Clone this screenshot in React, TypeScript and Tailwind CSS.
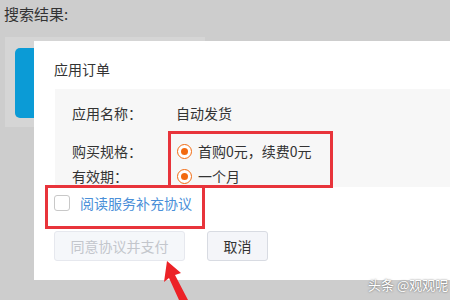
export default function App() {
  return (
    <div
      className="relative w-[450px] h-[300px] overflow-hidden bg-[#cdcdcd] text-[14px] text-[#333]"
      style={{ fontFamily: '"Noto Sans CJK SC", "Noto Sans", sans-serif' }}
    >
      {/* Page behind the dialog */}
      <div className="pl-[4px] pt-[4px] h-[21px] leading-[20px] text-[15px] text-[#333]">搜索结果:</div>
      <div className="ml-[5px] mt-[16px] w-[200px] h-[90px] bg-[#d5d5d5] pl-[10px] pt-[11px]">
        <div className="w-[40px] h-[70px] rounded-[5px] bg-[#0b9bd6]" />
      </div>

      {/* Dialog */}
      <div className="absolute left-[34px] top-[41px] w-[430px] h-[239px] bg-white">
        <div className="pl-[20px] pt-[18px] h-[48px] leading-[20px]">应用订单</div>
        <div className="ml-[21px] h-[98px] bg-[#f7f7f7] pl-[17px] pt-[14px]">
          <div className="flex h-[20px] items-center">
            <span className="w-[104px]">应用名称：</span>
            <span>自动发货</span>
          </div>
          <div className="flex h-[20px] items-center mt-[18px]">
            <span className="w-[105px]">购买规格：</span>
            <Radio />
            <span className="ml-[6px]">首购0元，续费0元</span>
          </div>
          <div className="flex h-[20px] items-center mt-[5px]">
            <span className="w-[105px]">有效期：</span>
            <Radio />
            <span className="ml-[6px]">一个月</span>
          </div>
        </div>
        <div className="flex items-center h-[40px] mt-[-4px] pl-[20px]">
          <span className="w-[16px] h-[16px] rounded-[3px] border border-[#c8c8c8] bg-white" />
          <span className="ml-[10px] text-[#4a8fd8]">阅读服务补充协议</span>
        </div>
        <div className="flex gap-[22px] pl-[20px] mt-[8px]">
          <button className="w-[131px] h-[30px] rounded-[3px] border border-[#e6e8ee] bg-[#f5f7fa] text-[#c3c6cc]">
            同意协议并支付
          </button>
          <button className="w-[61px] h-[30px] rounded-[3px] border border-[#d8dbe2] bg-[#f4f5f9] text-[#333]">
            取消
          </button>
        </div>
      </div>

      {/* Red annotations */}
      <div className="absolute left-[168px] top-[131px] w-[165px] h-[57px] border-[3px] border-[#e8343b]" />
      <div className="absolute left-[45px] top-[185px] w-[160px] h-[44px] border-[3px] border-[#e8343b]" />
      <svg className="absolute left-[150px] top-[255px]" width="50" height="45" viewBox="0 0 50 45">
        <polygon points="17,6 31,18 25,20 38,45 29,45 19,23 14,27" fill="#ec2227" />
      </svg>

      {/* Watermark */}
      <div
        className="absolute left-[368px] top-[276px] whitespace-nowrap text-[13px] text-white leading-[18px]"
        style={{ textShadow: "0 0 2px rgba(0,0,0,0.6)" }}
      >
        头条 @观观呢
      </div>
    </div>
  );
}

function Radio() {
  return (
    <span className="flex items-center justify-center w-[15px] h-[15px] rounded-full border-[1.5px] border-[#f26a10] bg-white">
      <span className="w-[7px] h-[7px] rounded-full bg-[#f26a10]" />
    </span>
  );
}
